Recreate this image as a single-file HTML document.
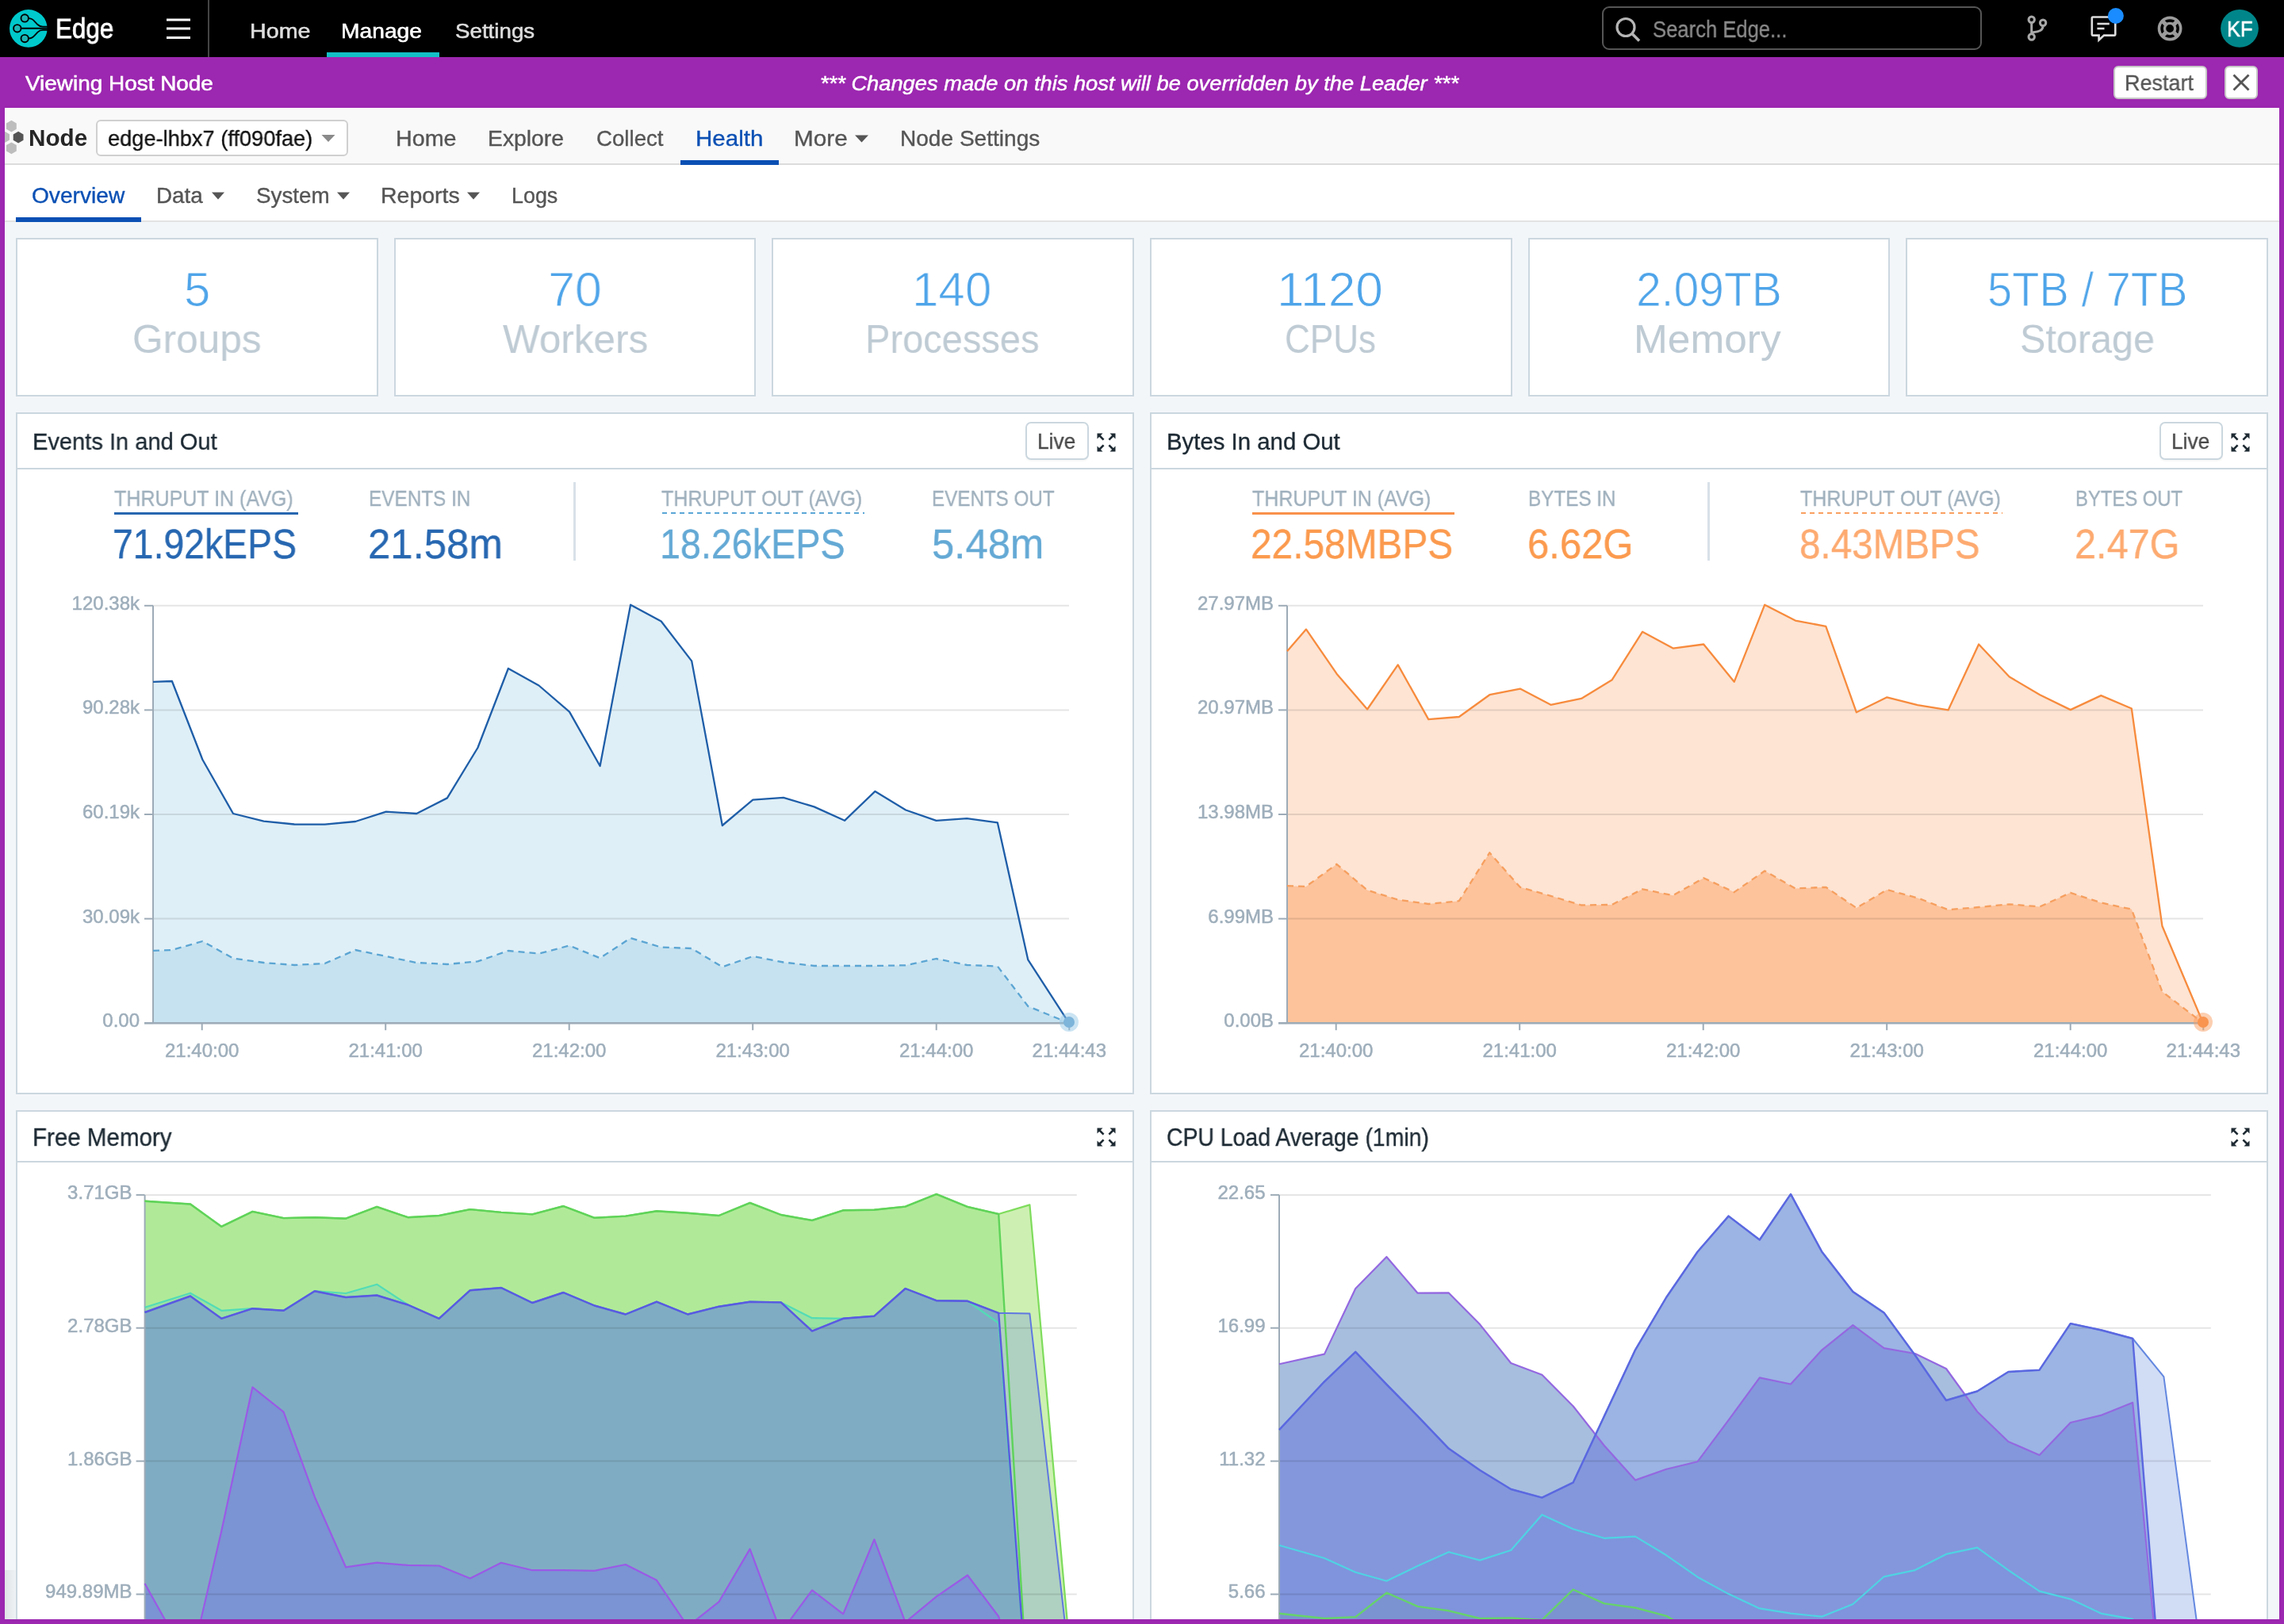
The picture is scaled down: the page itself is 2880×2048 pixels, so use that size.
<!DOCTYPE html>
<html><head><meta charset="utf-8"><title>Edge - Health Overview</title>
<style>
html,body{margin:0;padding:0;width:2880px;height:2048px;overflow:hidden;background:#f3f6f9}
body{position:relative;font-family:"Liberation Sans",sans-serif}
.t{position:absolute;white-space:pre;line-height:1;transform-origin:0 0;will-change:transform}
.cl{font-family:"Liberation Sans",sans-serif;font-size:24px;fill:#9eaebb;stroke:#9eaebb;stroke-width:0.5px}
</style></head><body>
<div style="position:absolute;left:0px;top:0px;width:2880px;height:72px;background:#000"></div>
<div style="position:absolute;left:0px;top:72px;width:2880px;height:64px;background:#9c27b0"></div>
<div style="position:absolute;left:0px;top:136px;width:6px;height:1912px;background:#9c27b0"></div>
<div style="position:absolute;left:2874px;top:136px;width:6px;height:1912px;background:#9c27b0"></div>
<div style="position:absolute;left:6px;top:136px;width:2868px;height:71px;background:#f9f9f9"></div>
<div style="position:absolute;left:6px;top:206px;width:2868px;height:2px;background:#dcdcdc"></div>
<div style="position:absolute;left:6px;top:208px;width:2868px;height:70px;background:#fff"></div>
<div style="position:absolute;left:6px;top:278px;width:2868px;height:2px;background:#e2e2e2"></div>
<div style="position:absolute;left:6px;top:280px;width:2868px;height:1762px;background:#f3f6f9"></div>
<div style="position:absolute;left:6px;top:1980px;width:14px;height:62px;background:linear-gradient(90deg,#e1e4e6,#eef2f5)"></div>
<svg style="position:absolute;left:0;top:0" width="2880" height="72">
<circle cx="35.8" cy="35.9" r="23.8" fill="#00c9cc"/>
<g fill="none" stroke="#000" stroke-width="1.8">
<path d="M36 23.2 C39.5 23.2 41 24 43.5 26.8 L47.5 31 C49.5 33 51 33.7 54 33.7 L60 33.7"/>
<path d="M36 48.4 C39.5 48.4 41 47.6 43.5 44.8 L47.5 40.6 C49.5 38.6 51 37.9 54 37.9 L60 37.9"/>
<path d="M26.4 35.8 L60 35.8" stroke-width="2"/>
</g>
<g fill="#1fb5b5" stroke="#000" stroke-width="1.9">
<circle cx="31.2" cy="22.9" r="4.7"/><circle cx="21.8" cy="35.8" r="4.7"/><circle cx="31.2" cy="48.6" r="4.7"/>
</g>
<g stroke="#fff" stroke-width="3"><line x1="210" y1="25" x2="240" y2="25"/><line x1="210" y1="36" x2="240" y2="36"/><line x1="210" y1="47.5" x2="240" y2="47.5"/></g>
<line x1="263" y1="0" x2="263" y2="72" stroke="#444" stroke-width="2"/>
<rect x="412" y="66" width="142" height="6" fill="#13bfc6"/>
<rect x="2021" y="9" width="477" height="53" rx="8" fill="#000" stroke="#555" stroke-width="2"/>
<circle cx="2050" cy="34.5" r="11" fill="none" stroke="#b5b5b5" stroke-width="3.2"/>
<line x1="2058" y1="42.5" x2="2067" y2="51.5" stroke="#b5b5b5" stroke-width="3.6"/>
<g fill="none" stroke="#a8a8a8" stroke-width="3">
<circle cx="2561.7" cy="24.8" r="3.7"/><circle cx="2576.1" cy="28.7" r="3.7"/><circle cx="2561.7" cy="46.5" r="3.7"/>
<path d="M2561.7 28.5 L2561.7 42.8"/>
<path d="M2576.1 32.3 C2576.1 38 2573 39.5 2562 41"/>
</g>
<g fill="none" stroke="#dcdcdc" stroke-width="2.6">
<path d="M2639 21.5 H2666 Q2667.3 21.5 2667.3 23 V43 Q2667.3 44.6 2666 44.6 H2653 L2646.6 50.5 V44.6 H2639 Q2637.8 44.6 2637.8 43 V23 Q2637.8 21.5 2639 21.5 Z"/>
<line x1="2644.4" y1="30" x2="2659.8" y2="30"/><line x1="2644.4" y1="36" x2="2653.5" y2="36"/>
</g>
<circle cx="2667.9" cy="20" r="10" fill="#1a8cff"/>
<g fill="none" stroke="#9c9c9c">
<circle cx="2736.1" cy="36" r="13.6" stroke-width="3.6"/>
<circle cx="2736.1" cy="36" r="6.6" stroke-width="3.4"/>
<g stroke-width="5.2"><line x1="2726.6" y1="26.5" x2="2731.3" y2="31.2"/><line x1="2745.6" y1="26.5" x2="2740.9" y2="31.2"/><line x1="2726.6" y1="45.5" x2="2731.3" y2="40.8"/><line x1="2745.6" y1="45.5" x2="2740.9" y2="40.8"/></g>
</g>
<circle cx="2824" cy="35.8" r="23.9" fill="#00868a"/>
</svg>
<div class="t" style="left:70.31px;top:19.00px;font-size:34.16px;color:#fff;font-weight:normal;font-style:normal;transform:scaleX(0.9180);-webkit-text-stroke:0.8px #fff;">Edge</div>
<div class="t" style="left:314.63px;top:25.71px;font-size:26.45px;color:#dedede;font-weight:normal;font-style:normal;transform:scaleX(1.0854);-webkit-text-stroke:0.55px #dedede;">Home</div>
<div class="t" style="left:430.17px;top:25.71px;font-size:26.45px;color:#fff;font-weight:normal;font-style:normal;transform:scaleX(1.0677);-webkit-text-stroke:0.55px #fff;">Manage</div>
<div class="t" style="left:573.75px;top:25.71px;font-size:26.45px;color:#dedede;font-weight:normal;font-style:normal;transform:scaleX(1.0487);-webkit-text-stroke:0.55px #dedede;">Settings</div>
<div class="t" style="left:2083.85px;top:23.01px;font-size:29.07px;color:#8a8a8a;font-weight:normal;font-style:normal;transform:scaleX(0.8812);-webkit-text-stroke:0.35px #8a8a8a;">Search Edge...</div>
<div class="t" style="left:2807.60px;top:22.50px;font-size:28.05px;color:#fff;font-weight:normal;font-style:normal;transform:scaleX(0.9074);-webkit-text-stroke:0.6px #fff;">KF</div>
<div class="t" style="left:32.36px;top:92.75px;font-size:25.44px;color:#fff;font-weight:normal;font-style:normal;transform:scaleX(1.0973);-webkit-text-stroke:0.55px #fff;">Viewing Host Node</div>
<div class="t" style="left:1034.36px;top:91.75px;font-size:26.53px;color:#fff;font-weight:normal;font-style:italic;transform:scaleX(1.0286);-webkit-text-stroke:0.5px #fff;">*** Changes made on this host will be overridden by the Leader ***</div>
<div style="position:absolute;left:2665px;top:83px;width:118px;height:42px;background:#fff;border:2px solid #c8c8c8;border-radius:6px;box-sizing:border-box"></div>
<div class="t" style="left:2679.27px;top:90.76px;font-size:27.25px;color:#555;font-weight:normal;font-style:normal;transform:scaleX(0.9898);-webkit-text-stroke:0.35px #555;">Restart</div>
<div style="position:absolute;left:2805px;top:83px;width:42px;height:42px;background:#fff;border:2px solid #c8c8c8;border-radius:6px;box-sizing:border-box"></div>
<svg style="position:absolute;left:2805px;top:83px" width="42" height="42"><g stroke="#555" stroke-width="2.8"><line x1="11.5" y1="11.5" x2="30.5" y2="30.5"/><line x1="30.5" y1="11.5" x2="11.5" y2="30.5"/></g></svg>
<svg style="position:absolute;left:0;top:136px" width="40" height="71">
<defs><path id="hx" d="M0 -7.4 L6.4 -3.7 L6.4 3.7 L0 7.4 L-6.4 3.7 L-6.4 -3.7 Z"/></defs>
<use href="#hx" x="14.4" y="23.1" fill="#bdbdbd"/>
<use href="#hx" x="5.6" y="36.9" fill="#bdbdbd"/>
<use href="#hx" x="14.4" y="50.8" fill="#bdbdbd"/>
<use href="#hx" x="23.1" y="37.1" fill="#555"/>
</svg>
<div style="position:absolute;left:0px;top:136px;width:6px;height:71px;background:#9c27b0"></div>
<div class="t" style="left:35.80px;top:160.01px;font-size:29.07px;color:#262626;font-weight:bold;font-style:normal;transform:scaleX(1.0205);">Node</div>
<div style="position:absolute;left:121px;top:151px;width:318px;height:46px;background:#fff;border:2px solid #d0d0d0;border-radius:6px;box-sizing:border-box"></div>
<div class="t" style="left:135.84px;top:161.25px;font-size:27.98px;color:#111;font-weight:normal;font-style:normal;transform:scaleX(0.9730);-webkit-text-stroke:0.35px #111;">edge-lhbx7 (ff090fae)</div>
<svg style="position:absolute;left:0;top:0" width="2880" height="300"><path d="M405.5 170 L422.5 170 L414 179 Z" fill="#8a8a8a"/><path d="M1078 170.5 L1095 170.5 L1086.5 179.5 Z" fill="#555"/><path d="M267 242.5 L283 242.5 L275 251.5 Z" fill="#555"/><path d="M425 242.5 L441 242.5 L433 251.5 Z" fill="#555"/><path d="M589 242.5 L605 242.5 L597 251.5 Z" fill="#555"/></svg>
<div class="t" style="left:498.63px;top:161.26px;font-size:27.25px;color:#555;font-weight:normal;font-style:normal;transform:scaleX(1.0535);-webkit-text-stroke:0.35px #555;">Home</div>
<div class="t" style="left:614.66px;top:161.26px;font-size:27.25px;color:#555;font-weight:normal;font-style:normal;transform:scaleX(1.0396);-webkit-text-stroke:0.35px #555;">Explore</div>
<div class="t" style="left:751.62px;top:161.26px;font-size:27.25px;color:#555;font-weight:normal;font-style:normal;transform:scaleX(1.0152);-webkit-text-stroke:0.35px #555;">Collect</div>
<div class="t" style="left:1000.55px;top:161.26px;font-size:27.25px;color:#555;font-weight:normal;font-style:normal;transform:scaleX(1.0910);-webkit-text-stroke:0.35px #555;">More</div>
<div class="t" style="left:1134.68px;top:161.26px;font-size:27.25px;color:#555;font-weight:normal;font-style:normal;transform:scaleX(1.0297);-webkit-text-stroke:0.35px #555;">Node Settings</div>
<div class="t" style="left:876.57px;top:161.26px;font-size:27.25px;color:#0b50b4;font-weight:normal;font-style:normal;transform:scaleX(1.0828);-webkit-text-stroke:0.35px #0b50b4;">Health</div>
<div style="position:absolute;left:858px;top:202px;width:124px;height:6px;background:#0b50b4"></div>
<div class="t" style="left:39.66px;top:234.00px;font-size:26.89px;color:#0b50b4;font-weight:normal;font-style:normal;transform:scaleX(1.0464);-webkit-text-stroke:0.35px #0b50b4;">Overview</div>
<div class="t" style="left:196.70px;top:234.00px;font-size:26.89px;color:#555;font-weight:normal;font-style:normal;transform:scaleX(1.0351);-webkit-text-stroke:0.35px #555;">Data</div>
<div class="t" style="left:323.25px;top:234.00px;font-size:26.89px;color:#555;font-weight:normal;font-style:normal;transform:scaleX(1.0329);-webkit-text-stroke:0.35px #555;">System</div>
<div class="t" style="left:480.15px;top:234.00px;font-size:26.89px;color:#555;font-weight:normal;font-style:normal;transform:scaleX(1.0602);-webkit-text-stroke:0.35px #555;">Reports</div>
<div class="t" style="left:644.79px;top:234.00px;font-size:26.89px;color:#555;font-weight:normal;font-style:normal;transform:scaleX(0.9978);-webkit-text-stroke:0.35px #555;">Logs</div>
<div style="position:absolute;left:20px;top:274px;width:158px;height:6px;background:#0b50b4"></div>
<div style="position:absolute;left:20.0px;top:300px;width:456.67px;height:200px;background:#fff;border:2px solid #cbd7df;box-sizing:border-box"></div>
<div class="t" style="left:231.68px;top:334.01px;font-size:61.77px;color:#4ea4e9;font-weight:normal;font-style:normal;transform:scaleX(0.9713);-webkit-text-stroke:1.0px #fff;">5</div>
<div class="t" style="left:166.60px;top:403.00px;font-size:50.15px;color:#bfcbd4;font-weight:normal;font-style:normal;transform:scaleX(0.9893);-webkit-text-stroke:0.1px #bfcbd4;">Groups</div>
<div style="position:absolute;left:496.67px;top:300px;width:456.67px;height:200px;background:#fff;border:2px solid #cbd7df;box-sizing:border-box"></div>
<div class="t" style="left:690.69px;top:334.01px;font-size:61.77px;color:#4ea4e9;font-weight:normal;font-style:normal;transform:scaleX(0.9895);-webkit-text-stroke:1.0px #fff;">70</div>
<div class="t" style="left:634.12px;top:403.00px;font-size:50.15px;color:#bfcbd4;font-weight:normal;font-style:normal;transform:scaleX(0.9862);-webkit-text-stroke:0.1px #bfcbd4;">Workers</div>
<div style="position:absolute;left:973.33px;top:300px;width:456.67px;height:200px;background:#fff;border:2px solid #cbd7df;box-sizing:border-box"></div>
<div class="t" style="left:1150.40px;top:334.01px;font-size:61.77px;color:#4ea4e9;font-weight:normal;font-style:normal;transform:scaleX(0.9734);-webkit-text-stroke:1.0px #fff;">140</div>
<div class="t" style="left:1090.78px;top:403.00px;font-size:50.15px;color:#bfcbd4;font-weight:normal;font-style:normal;transform:scaleX(0.9379);-webkit-text-stroke:0.1px #bfcbd4;">Processes</div>
<div style="position:absolute;left:1450.0px;top:300px;width:456.67px;height:200px;background:#fff;border:2px solid #cbd7df;box-sizing:border-box"></div>
<div class="t" style="left:1610.16px;top:334.01px;font-size:61.77px;color:#4ea4e9;font-weight:normal;font-style:normal;transform:scaleX(1.0090);-webkit-text-stroke:1.0px #fff;">1120</div>
<div class="t" style="left:1620.48px;top:403.00px;font-size:50.15px;color:#bfcbd4;font-weight:normal;font-style:normal;transform:scaleX(0.8782);-webkit-text-stroke:0.1px #bfcbd4;">CPUs</div>
<div style="position:absolute;left:1926.67px;top:300px;width:456.67px;height:200px;background:#fff;border:2px solid #cbd7df;box-sizing:border-box"></div>
<div class="t" style="left:2063.15px;top:334.01px;font-size:61.77px;color:#4ea4e9;font-weight:normal;font-style:normal;transform:scaleX(0.9228);-webkit-text-stroke:1.0px #fff;">2.09TB</div>
<div class="t" style="left:2060.11px;top:403.00px;font-size:50.15px;color:#bfcbd4;font-weight:normal;font-style:normal;transform:scaleX(1.0249);-webkit-text-stroke:0.1px #bfcbd4;">Memory</div>
<div style="position:absolute;left:2403.34px;top:300px;width:456.67px;height:200px;background:#fff;border:2px solid #cbd7df;box-sizing:border-box"></div>
<div class="t" style="left:2505.72px;top:334.01px;font-size:61.77px;color:#4ea4e9;font-weight:normal;font-style:normal;transform:scaleX(0.9082);-webkit-text-stroke:1.0px #fff;">5TB / 7TB</div>
<div class="t" style="left:2546.58px;top:403.00px;font-size:50.15px;color:#bfcbd4;font-weight:normal;font-style:normal;transform:scaleX(0.9682);-webkit-text-stroke:0.1px #bfcbd4;">Storage</div>
<div style="position:absolute;left:20px;top:520px;width:1410px;height:860px;background:#fff;border:2px solid #cbd7df;box-sizing:border-box"></div>
<div style="position:absolute;left:20px;top:590px;width:1410px;height:2px;background:#cbd7df"></div>
<div class="t" style="left:40.60px;top:542.81px;font-size:29.22px;color:#1d2a34;font-weight:normal;font-style:normal;transform:scaleX(0.9946);-webkit-text-stroke:0.35px #1d2a34;">Events In and Out</div>
<div style="position:absolute;left:1293px;top:532px;width:80px;height:48px;background:#fff;border:2px solid #cbd7df;border-radius:7px;box-sizing:border-box;box-shadow:0 2px 2px rgba(0,0,0,0.03)"></div>
<div class="t" style="left:1307.93px;top:543.00px;font-size:28.05px;color:#4a4a4a;font-weight:normal;font-style:normal;transform:scaleX(0.9395);-webkit-text-stroke:0.35px #4a4a4a;">Live</div>
<svg style="position:absolute;left:1383px;top:546px" width="24" height="24" viewBox="0 0 24 24"><g stroke="#1e2a33" stroke-width="2.6" fill="#1e2a33">
<line x1="3" y1="3" x2="8.6" y2="8.6"/><line x1="21" y1="3" x2="15.4" y2="8.6"/><line x1="3" y1="21" x2="8.6" y2="15.4"/><line x1="21" y1="21" x2="15.4" y2="15.4"/></g>
<g fill="#1e2a33"><path d="M0.5 0.5 H7.5 L0.5 7.5 Z"/><path d="M23.5 0.5 H16.5 L23.5 7.5 Z"/><path d="M0.5 23.5 H7.5 L0.5 16.5 Z"/><path d="M23.5 23.5 H16.5 L23.5 16.5 Z"/></g></svg>
<div style="position:absolute;left:1450px;top:520px;width:1410px;height:860px;background:#fff;border:2px solid #cbd7df;box-sizing:border-box"></div>
<div style="position:absolute;left:1450px;top:590px;width:1410px;height:2px;background:#cbd7df"></div>
<div class="t" style="left:1470.58px;top:542.81px;font-size:29.22px;color:#1d2a34;font-weight:normal;font-style:normal;transform:scaleX(1.0049);-webkit-text-stroke:0.35px #1d2a34;">Bytes In and Out</div>
<div style="position:absolute;left:2723px;top:532px;width:80px;height:48px;background:#fff;border:2px solid #cbd7df;border-radius:7px;box-sizing:border-box;box-shadow:0 2px 2px rgba(0,0,0,0.03)"></div>
<div class="t" style="left:2737.93px;top:543.00px;font-size:28.05px;color:#4a4a4a;font-weight:normal;font-style:normal;transform:scaleX(0.9395);-webkit-text-stroke:0.35px #4a4a4a;">Live</div>
<svg style="position:absolute;left:2813px;top:546px" width="24" height="24" viewBox="0 0 24 24"><g stroke="#1e2a33" stroke-width="2.6" fill="#1e2a33">
<line x1="3" y1="3" x2="8.6" y2="8.6"/><line x1="21" y1="3" x2="15.4" y2="8.6"/><line x1="3" y1="21" x2="8.6" y2="15.4"/><line x1="21" y1="21" x2="15.4" y2="15.4"/></g>
<g fill="#1e2a33"><path d="M0.5 0.5 H7.5 L0.5 7.5 Z"/><path d="M23.5 0.5 H16.5 L23.5 7.5 Z"/><path d="M0.5 23.5 H7.5 L0.5 16.5 Z"/><path d="M23.5 23.5 H16.5 L23.5 16.5 Z"/></g></svg>
<div style="position:absolute;left:20px;top:1400px;width:1410px;height:700px;background:#fff;border:2px solid #cbd7df;box-sizing:border-box"></div>
<div style="position:absolute;left:20px;top:1464px;width:1410px;height:2px;background:#cbd7df"></div>
<div class="t" style="left:40.56px;top:1418.71px;font-size:30.67px;color:#1d2a34;font-weight:normal;font-style:normal;transform:scaleX(0.9626);-webkit-text-stroke:0.35px #1d2a34;">Free Memory</div>
<svg style="position:absolute;left:1383px;top:1421.6px" width="24" height="24" viewBox="0 0 24 24"><g stroke="#1e2a33" stroke-width="2.6" fill="#1e2a33">
<line x1="3" y1="3" x2="8.6" y2="8.6"/><line x1="21" y1="3" x2="15.4" y2="8.6"/><line x1="3" y1="21" x2="8.6" y2="15.4"/><line x1="21" y1="21" x2="15.4" y2="15.4"/></g>
<g fill="#1e2a33"><path d="M0.5 0.5 H7.5 L0.5 7.5 Z"/><path d="M23.5 0.5 H16.5 L23.5 7.5 Z"/><path d="M0.5 23.5 H7.5 L0.5 16.5 Z"/><path d="M23.5 23.5 H16.5 L23.5 16.5 Z"/></g></svg>
<div style="position:absolute;left:1450px;top:1400px;width:1410px;height:700px;background:#fff;border:2px solid #cbd7df;box-sizing:border-box"></div>
<div style="position:absolute;left:1450px;top:1464px;width:1410px;height:2px;background:#cbd7df"></div>
<div class="t" style="left:1471.38px;top:1418.71px;font-size:30.67px;color:#1d2a34;font-weight:normal;font-style:normal;transform:scaleX(0.9261);-webkit-text-stroke:0.35px #1d2a34;">CPU Load Average (1min)</div>
<svg style="position:absolute;left:2813px;top:1421.6px" width="24" height="24" viewBox="0 0 24 24"><g stroke="#1e2a33" stroke-width="2.6" fill="#1e2a33">
<line x1="3" y1="3" x2="8.6" y2="8.6"/><line x1="21" y1="3" x2="15.4" y2="8.6"/><line x1="3" y1="21" x2="8.6" y2="15.4"/><line x1="21" y1="21" x2="15.4" y2="15.4"/></g>
<g fill="#1e2a33"><path d="M0.5 0.5 H7.5 L0.5 7.5 Z"/><path d="M23.5 0.5 H16.5 L23.5 7.5 Z"/><path d="M0.5 23.5 H7.5 L0.5 16.5 Z"/><path d="M23.5 23.5 H16.5 L23.5 16.5 Z"/></g></svg>
<div class="t" style="left:143.84px;top:614.81px;font-size:27.33px;color:#9fb0bd;font-weight:normal;font-style:normal;transform:scaleX(0.9158);-webkit-text-stroke:0.35px #9fb0bd;">THRUPUT IN (AVG)</div>
<div class="t" style="left:142.08px;top:660.01px;font-size:52.33px;color:#2767b1;font-weight:normal;font-style:normal;transform:scaleX(0.8859);-webkit-text-stroke:0.35px #2767b1;">71.92kEPS</div>
<div style="position:absolute;left:144.4px;top:646px;width:231.6px;height:2.5px;background:#2767b1"></div>
<div class="t" style="left:464.59px;top:614.81px;font-size:27.33px;color:#9fb0bd;font-weight:normal;font-style:normal;transform:scaleX(0.8900);-webkit-text-stroke:0.35px #9fb0bd;">EVENTS IN</div>
<div class="t" style="left:464.05px;top:660.01px;font-size:52.33px;color:#2767b1;font-weight:normal;font-style:normal;transform:scaleX(0.9728);-webkit-text-stroke:0.35px #2767b1;">21.58m</div>
<div style="position:absolute;left:723px;top:608px;width:3px;height:99px;background:#d8e1e8"></div>
<div class="t" style="left:834.44px;top:614.81px;font-size:27.33px;color:#9fb0bd;font-weight:normal;font-style:normal;transform:scaleX(0.9160);-webkit-text-stroke:0.35px #9fb0bd;">THRUPUT OUT (AVG)</div>
<div class="t" style="left:831.50px;top:660.01px;font-size:52.33px;color:#64a9d5;font-weight:normal;font-style:normal;transform:scaleX(0.8920);-webkit-text-stroke:0.35px #64a9d5;">18.26kEPS</div>
<div style="position:absolute;left:835px;top:646px;width:255px;height:2px;background:repeating-linear-gradient(90deg,#5aa6d6 0 6px,transparent 6px 11px)"></div>
<div class="t" style="left:1175.00px;top:614.81px;font-size:27.33px;color:#9fb0bd;font-weight:normal;font-style:normal;transform:scaleX(0.8851);-webkit-text-stroke:0.35px #9fb0bd;">EVENTS OUT</div>
<div class="t" style="left:1174.97px;top:660.01px;font-size:52.33px;color:#64a9d5;font-weight:normal;font-style:normal;transform:scaleX(0.9716);-webkit-text-stroke:0.35px #64a9d5;">5.48m</div>
<div class="t" style="left:1578.74px;top:614.81px;font-size:27.33px;color:#9fb0bd;font-weight:normal;font-style:normal;transform:scaleX(0.9142);-webkit-text-stroke:0.35px #9fb0bd;">THRUPUT IN (AVG)</div>
<div class="t" style="left:1576.91px;top:660.01px;font-size:52.33px;color:#fb9a4e;font-weight:normal;font-style:normal;transform:scaleX(0.9139);-webkit-text-stroke:0.35px #fb9a4e;">22.58MBPS</div>
<div style="position:absolute;left:1579.3px;top:646px;width:254.7px;height:2.5px;background:#f9914a"></div>
<div class="t" style="left:1926.60px;top:614.81px;font-size:27.33px;color:#9fb0bd;font-weight:normal;font-style:normal;transform:scaleX(0.8865);-webkit-text-stroke:0.35px #9fb0bd;">BYTES IN</div>
<div class="t" style="left:1926.15px;top:660.01px;font-size:52.33px;color:#fb9a4e;font-weight:normal;font-style:normal;transform:scaleX(0.9364);-webkit-text-stroke:0.35px #fb9a4e;">6.62G</div>
<div style="position:absolute;left:2153px;top:608px;width:3px;height:99px;background:#d8e1e8"></div>
<div class="t" style="left:2270.24px;top:614.81px;font-size:27.33px;color:#9fb0bd;font-weight:normal;font-style:normal;transform:scaleX(0.9146);-webkit-text-stroke:0.35px #9fb0bd;">THRUPUT OUT (AVG)</div>
<div class="t" style="left:2268.78px;top:660.01px;font-size:52.33px;color:#fdaa70;font-weight:normal;font-style:normal;transform:scaleX(0.9098);-webkit-text-stroke:0.35px #fdaa70;">8.43MBPS</div>
<div style="position:absolute;left:2270.8px;top:646px;width:254.6px;height:2px;background:repeating-linear-gradient(90deg,#f9a060 0 6px,transparent 6px 11px)"></div>
<div class="t" style="left:2616.53px;top:614.81px;font-size:27.33px;color:#9fb0bd;font-weight:normal;font-style:normal;transform:scaleX(0.8717);-webkit-text-stroke:0.35px #9fb0bd;">BYTES OUT</div>
<div class="t" style="left:2616.07px;top:660.01px;font-size:52.33px;color:#fdaa70;font-weight:normal;font-style:normal;transform:scaleX(0.9298);-webkit-text-stroke:0.35px #fdaa70;">2.47G</div>
<svg style="position:absolute;left:0;top:0" width="2880" height="2048">
<defs><clipPath id="cEv"><rect x="22" y="590" width="1406" height="787"/></clipPath><clipPath id="cBy"><rect x="1452" y="590" width="1406" height="787"/></clipPath><clipPath id="cMem"><rect x="22" y="1470" width="1406" height="572"/></clipPath><clipPath id="cCpu"><rect x="1452" y="1470" width="1406" height="572"/></clipPath></defs>
<g clip-path="url(#cEv)"><path d="M193.0,1290.2 L193.0,859.8 L216.9,859.0 L255.4,958.0 L294.0,1026.0 L332.6,1035.7 L371.1,1039.5 L409.6,1039.7 L448.2,1036.0 L486.8,1023.7 L525.3,1026.0 L563.9,1006.4 L602.4,943.0 L640.9,843.0 L679.5,864.5 L718.0,897.6 L756.6,966.0 L795.1,762.7 L833.7,783.5 L872.2,833.6 L910.8,1041.0 L949.3,1008.6 L987.9,1005.8 L1026.5,1017.4 L1065.0,1034.8 L1103.5,997.9 L1142.1,1021.5 L1180.6,1034.8 L1219.2,1032.2 L1257.8,1037.3 L1296.3,1210.4 L1348.0,1290.2 L1348.0,1290.2 Z" fill="#dfeff7" /><path d="M193.0,1290.2 L193.0,1198.9 L216.9,1198.0 L255.4,1187.0 L294.0,1208.5 L332.6,1214.0 L371.1,1217.0 L409.6,1215.0 L448.2,1198.0 L486.8,1206.0 L525.3,1214.0 L563.9,1216.0 L602.4,1212.4 L640.9,1199.0 L679.5,1202.6 L718.0,1192.5 L756.6,1208.2 L795.1,1183.0 L833.7,1194.6 L872.2,1196.0 L910.8,1219.4 L949.3,1206.0 L987.9,1213.5 L1026.5,1218.0 L1065.0,1218.0 L1103.5,1218.0 L1142.1,1217.3 L1180.6,1209.0 L1219.2,1217.0 L1257.8,1218.5 L1296.3,1269.0 L1348.0,1290.2 L1348.0,1290.2 Z" fill="#c6e2f0" /><line x1="193" y1="763.8" x2="1348" y2="763.8" stroke="rgba(0,0,0,0.1)" stroke-width="2"/><line x1="182" y1="763.8" x2="193" y2="763.8" stroke="#9dabb7" stroke-width="2"/><line x1="193" y1="895.4" x2="1348" y2="895.4" stroke="rgba(0,0,0,0.1)" stroke-width="2"/><line x1="182" y1="895.4" x2="193" y2="895.4" stroke="#9dabb7" stroke-width="2"/><line x1="193" y1="1027.0" x2="1348" y2="1027.0" stroke="rgba(0,0,0,0.1)" stroke-width="2"/><line x1="182" y1="1027.0" x2="193" y2="1027.0" stroke="#9dabb7" stroke-width="2"/><line x1="193" y1="1158.6" x2="1348" y2="1158.6" stroke="rgba(0,0,0,0.1)" stroke-width="2"/><line x1="182" y1="1158.6" x2="193" y2="1158.6" stroke="#9dabb7" stroke-width="2"/><line x1="193" y1="1290.2" x2="1348" y2="1290.2" stroke="rgba(0,0,0,0.1)" stroke-width="2"/><line x1="182" y1="1290.2" x2="193" y2="1290.2" stroke="#9dabb7" stroke-width="2"/><line x1="193" y1="763.8" x2="193" y2="1290.2" stroke="#9dabb7" stroke-width="2"/><text x="176" y="768.6999999999999" text-anchor="end" class="cl">120.38k</text><text x="176" y="900.3" text-anchor="end" class="cl">90.28k</text><text x="176" y="1031.9" text-anchor="end" class="cl">60.19k</text><text x="176" y="1163.5" text-anchor="end" class="cl">30.09k</text><text x="176" y="1295.1000000000001" text-anchor="end" class="cl">0.00</text><line x1="182" y1="1290.2" x2="1348" y2="1290.2" stroke="#9dabb7" stroke-width="2.5"/><line x1="254.7" y1="1290.2" x2="254.7" y2="1299.2" stroke="#9dabb7" stroke-width="2"/><text x="254.7" y="1333" text-anchor="middle" class="cl">21:40:00</text><line x1="486.2" y1="1290.2" x2="486.2" y2="1299.2" stroke="#9dabb7" stroke-width="2"/><text x="486.2" y="1333" text-anchor="middle" class="cl">21:41:00</text><line x1="717.7" y1="1290.2" x2="717.7" y2="1299.2" stroke="#9dabb7" stroke-width="2"/><text x="717.7" y="1333" text-anchor="middle" class="cl">21:42:00</text><line x1="949.2" y1="1290.2" x2="949.2" y2="1299.2" stroke="#9dabb7" stroke-width="2"/><text x="949.2" y="1333" text-anchor="middle" class="cl">21:43:00</text><line x1="1180.7" y1="1290.2" x2="1180.7" y2="1299.2" stroke="#9dabb7" stroke-width="2"/><text x="1180.7" y="1333" text-anchor="middle" class="cl">21:44:00</text><line x1="1348.3" y1="1290.2" x2="1348.3" y2="1299.2" stroke="#9dabb7" stroke-width="2"/><text x="1348.3" y="1333" text-anchor="middle" class="cl">21:44:43</text><path d="M193.0,859.8 L216.9,859.0 L255.4,958.0 L294.0,1026.0 L332.6,1035.7 L371.1,1039.5 L409.6,1039.7 L448.2,1036.0 L486.8,1023.7 L525.3,1026.0 L563.9,1006.4 L602.4,943.0 L640.9,843.0 L679.5,864.5 L718.0,897.6 L756.6,966.0 L795.1,762.7 L833.7,783.5 L872.2,833.6 L910.8,1041.0 L949.3,1008.6 L987.9,1005.8 L1026.5,1017.4 L1065.0,1034.8 L1103.5,997.9 L1142.1,1021.5 L1180.6,1034.8 L1219.2,1032.2 L1257.8,1037.3 L1296.3,1210.4 L1348.0,1290.2" fill="none" stroke="#1f5ea8" stroke-width="2.3" stroke-linejoin="round" /><path d="M193.0,1198.9 L216.9,1198.0 L255.4,1187.0 L294.0,1208.5 L332.6,1214.0 L371.1,1217.0 L409.6,1215.0 L448.2,1198.0 L486.8,1206.0 L525.3,1214.0 L563.9,1216.0 L602.4,1212.4 L640.9,1199.0 L679.5,1202.6 L718.0,1192.5 L756.6,1208.2 L795.1,1183.0 L833.7,1194.6 L872.2,1196.0 L910.8,1219.4 L949.3,1206.0 L987.9,1213.5 L1026.5,1218.0 L1065.0,1218.0 L1103.5,1218.0 L1142.1,1217.3 L1180.6,1209.0 L1219.2,1217.0 L1257.8,1218.5 L1296.3,1269.0 L1348.0,1290.2" fill="none" stroke="#5ba5d3" stroke-width="2.3" stroke-linejoin="round" stroke-dasharray="8 6"/><circle cx="1348" cy="1289" r="12" fill="rgba(140,196,228,0.45)"/><circle cx="1348" cy="1289" r="7" fill="#7db4da"/></g>
<g clip-path="url(#cBy)"><path d="M1623.0,1290.2 L1623.0,821.3 L1647.0,793.6 L1685.5,849.7 L1724.1,894.5 L1762.7,838.4 L1801.2,907.1 L1839.8,904.0 L1878.3,876.2 L1916.8,868.6 L1955.4,888.8 L1994.0,880.9 L2032.5,857.6 L2071.1,796.7 L2109.6,817.6 L2148.2,812.5 L2186.7,859.8 L2225.2,762.7 L2263.8,782.6 L2302.3,789.8 L2340.9,898.3 L2379.4,879.3 L2418.0,889.1 L2456.6,895.4 L2495.1,812.5 L2533.7,853.5 L2572.2,876.2 L2610.8,895.1 L2649.3,877.1 L2687.8,893.5 L2726.4,1167.7 L2778.0,1290.2 L2778.0,1290.2 Z" fill="#fde4d3" /><path d="M1623.0,1290.2 L1623.0,1117.2 L1647.0,1117.9 L1685.5,1089.8 L1724.1,1122.6 L1762.7,1134.6 L1801.2,1140.0 L1839.8,1136.2 L1878.3,1075.3 L1916.8,1118.8 L1955.4,1129.8 L1994.0,1141.5 L2032.5,1140.9 L2071.1,1121.3 L2109.6,1129.2 L2148.2,1107.2 L2186.7,1125.1 L2225.2,1098.3 L2263.8,1120.4 L2302.3,1118.8 L2340.9,1145.0 L2379.4,1122.0 L2418.0,1132.4 L2456.6,1147.2 L2495.1,1144.0 L2533.7,1140.3 L2572.2,1143.4 L2610.8,1125.8 L2649.3,1138.4 L2687.8,1146.6 L2726.4,1250.6 L2778.0,1290.2 L2778.0,1290.2 Z" fill="#fdc39b" /><line x1="1623" y1="763.8" x2="2778" y2="763.8" stroke="rgba(0,0,0,0.1)" stroke-width="2"/><line x1="1612" y1="763.8" x2="1623" y2="763.8" stroke="#9dabb7" stroke-width="2"/><line x1="1623" y1="895.4" x2="2778" y2="895.4" stroke="rgba(0,0,0,0.1)" stroke-width="2"/><line x1="1612" y1="895.4" x2="1623" y2="895.4" stroke="#9dabb7" stroke-width="2"/><line x1="1623" y1="1027.0" x2="2778" y2="1027.0" stroke="rgba(0,0,0,0.1)" stroke-width="2"/><line x1="1612" y1="1027.0" x2="1623" y2="1027.0" stroke="#9dabb7" stroke-width="2"/><line x1="1623" y1="1158.6" x2="2778" y2="1158.6" stroke="rgba(0,0,0,0.1)" stroke-width="2"/><line x1="1612" y1="1158.6" x2="1623" y2="1158.6" stroke="#9dabb7" stroke-width="2"/><line x1="1623" y1="1290.2" x2="2778" y2="1290.2" stroke="rgba(0,0,0,0.1)" stroke-width="2"/><line x1="1612" y1="1290.2" x2="1623" y2="1290.2" stroke="#9dabb7" stroke-width="2"/><line x1="1623" y1="763.8" x2="1623" y2="1290.2" stroke="#9dabb7" stroke-width="2"/><text x="1606" y="768.6999999999999" text-anchor="end" class="cl">27.97MB</text><text x="1606" y="900.3" text-anchor="end" class="cl">20.97MB</text><text x="1606" y="1031.9" text-anchor="end" class="cl">13.98MB</text><text x="1606" y="1163.5" text-anchor="end" class="cl">6.99MB</text><text x="1606" y="1295.1000000000001" text-anchor="end" class="cl">0.00B</text><line x1="1612" y1="1290.2" x2="2778" y2="1290.2" stroke="#9dabb7" stroke-width="2.5"/><line x1="1684.7" y1="1290.2" x2="1684.7" y2="1299.2" stroke="#9dabb7" stroke-width="2"/><text x="1684.7" y="1333" text-anchor="middle" class="cl">21:40:00</text><line x1="1916.2" y1="1290.2" x2="1916.2" y2="1299.2" stroke="#9dabb7" stroke-width="2"/><text x="1916.2" y="1333" text-anchor="middle" class="cl">21:41:00</text><line x1="2147.7" y1="1290.2" x2="2147.7" y2="1299.2" stroke="#9dabb7" stroke-width="2"/><text x="2147.7" y="1333" text-anchor="middle" class="cl">21:42:00</text><line x1="2379.2" y1="1290.2" x2="2379.2" y2="1299.2" stroke="#9dabb7" stroke-width="2"/><text x="2379.2" y="1333" text-anchor="middle" class="cl">21:43:00</text><line x1="2610.7" y1="1290.2" x2="2610.7" y2="1299.2" stroke="#9dabb7" stroke-width="2"/><text x="2610.7" y="1333" text-anchor="middle" class="cl">21:44:00</text><line x1="2778.3" y1="1290.2" x2="2778.3" y2="1299.2" stroke="#9dabb7" stroke-width="2"/><text x="2778.3" y="1333" text-anchor="middle" class="cl">21:44:43</text><path d="M1623.0,821.3 L1647.0,793.6 L1685.5,849.7 L1724.1,894.5 L1762.7,838.4 L1801.2,907.1 L1839.8,904.0 L1878.3,876.2 L1916.8,868.6 L1955.4,888.8 L1994.0,880.9 L2032.5,857.6 L2071.1,796.7 L2109.6,817.6 L2148.2,812.5 L2186.7,859.8 L2225.2,762.7 L2263.8,782.6 L2302.3,789.8 L2340.9,898.3 L2379.4,879.3 L2418.0,889.1 L2456.6,895.4 L2495.1,812.5 L2533.7,853.5 L2572.2,876.2 L2610.8,895.1 L2649.3,877.1 L2687.8,893.5 L2726.4,1167.7 L2778.0,1290.2" fill="none" stroke="#f78b3d" stroke-width="2.3" stroke-linejoin="round" /><path d="M1623.0,1117.2 L1647.0,1117.9 L1685.5,1089.8 L1724.1,1122.6 L1762.7,1134.6 L1801.2,1140.0 L1839.8,1136.2 L1878.3,1075.3 L1916.8,1118.8 L1955.4,1129.8 L1994.0,1141.5 L2032.5,1140.9 L2071.1,1121.3 L2109.6,1129.2 L2148.2,1107.2 L2186.7,1125.1 L2225.2,1098.3 L2263.8,1120.4 L2302.3,1118.8 L2340.9,1145.0 L2379.4,1122.0 L2418.0,1132.4 L2456.6,1147.2 L2495.1,1144.0 L2533.7,1140.3 L2572.2,1143.4 L2610.8,1125.8 L2649.3,1138.4 L2687.8,1146.6 L2726.4,1250.6 L2778.0,1290.2" fill="none" stroke="#f69f5f" stroke-width="2.3" stroke-linejoin="round" stroke-dasharray="8 6"/><circle cx="2778" cy="1289" r="12" fill="rgba(250,160,100,0.5)"/><circle cx="2778" cy="1289" r="7" fill="#f89450"/></g>
<g clip-path="url(#cMem)"><path d="M182.6,2178 L182.6,1514.7 L240.0,1518.5 L279.2,1546.8 L318.4,1527.9 L357.6,1536.1 L396.8,1535.2 L436.0,1536.7 L475.2,1521.9 L514.4,1535.2 L553.6,1533.0 L592.8,1525.1 L632.0,1528.9 L671.2,1531.4 L710.4,1521.0 L749.6,1535.8 L788.8,1533.6 L828.0,1527.3 L867.2,1529.8 L906.4,1533.0 L945.6,1516.9 L984.8,1532.0 L1024.0,1539.0 L1063.2,1526.3 L1102.4,1525.7 L1141.6,1521.6 L1180.8,1505.9 L1220.0,1521.9 L1259.2,1531.0 L1298.4,1519.4 L1357.8,2178.0 L1357.8,2178 Z" fill="#cdf0b2" /><path d="M182.6,2178 L182.6,1514.7 L240.0,1518.5 L279.2,1546.8 L318.4,1527.9 L357.6,1536.1 L396.8,1535.2 L436.0,1536.7 L475.2,1521.9 L514.4,1535.2 L553.6,1533.0 L592.8,1525.1 L632.0,1528.9 L671.2,1531.4 L710.4,1521.0 L749.6,1535.8 L788.8,1533.6 L828.0,1527.3 L867.2,1529.8 L906.4,1533.0 L945.6,1516.9 L984.8,1532.0 L1024.0,1539.0 L1063.2,1526.3 L1102.4,1525.7 L1141.6,1521.6 L1180.8,1505.9 L1220.0,1521.9 L1259.2,1531.0 L1298.4,2178.0 L1298.4,2178 Z" fill="#b0ea98" /><path d="M182.6,2178 L182.6,1655.0 L240.0,1634.5 L279.2,1662.8 L318.4,1650.2 L357.6,1652.8 L396.8,1628.2 L436.0,1636.0 L475.2,1633.5 L514.4,1645.5 L553.6,1662.8 L592.8,1627.2 L632.0,1624.0 L671.2,1643.0 L710.4,1630.0 L749.6,1646.5 L788.8,1657.5 L828.0,1641.7 L867.2,1657.5 L906.4,1647.7 L945.6,1641.7 L984.8,1642.4 L1024.0,1678.6 L1063.2,1662.8 L1102.4,1659.7 L1141.6,1625.0 L1180.8,1640.2 L1220.0,1640.8 L1259.2,1655.9 L1298.4,1656.5 L1357.8,2178.0 L1357.8,2178 Z" fill="#afd1c1" /><path d="M182.6,2178 L182.6,1648.7 L240.0,1630.7 L279.2,1652.8 L318.4,1650.2 L357.6,1652.8 L396.8,1628.2 L436.0,1631.0 L475.2,1619.7 L514.4,1645.5 L553.6,1662.8 L592.8,1627.2 L632.0,1624.0 L671.2,1643.0 L710.4,1630.0 L749.6,1646.5 L788.8,1657.5 L828.0,1641.7 L867.2,1657.5 L906.4,1647.7 L945.6,1641.7 L984.8,1642.4 L1024.0,1662.2 L1063.2,1662.8 L1102.4,1659.7 L1141.6,1625.0 L1180.8,1640.2 L1220.0,1640.8 L1259.2,1668.5 L1298.4,2178.0 L1298.4,2178 Z" fill="#98e2a4" /><path d="M182.6,2178 L182.6,1655.0 L240.0,1634.5 L279.2,1662.8 L318.4,1650.2 L357.6,1652.8 L396.8,1628.2 L436.0,1636.0 L475.2,1633.5 L514.4,1645.5 L553.6,1662.8 L592.8,1627.2 L632.0,1624.0 L671.2,1643.0 L710.4,1630.0 L749.6,1646.5 L788.8,1657.5 L828.0,1641.7 L867.2,1657.5 L906.4,1647.7 L945.6,1641.7 L984.8,1642.4 L1024.0,1678.6 L1063.2,1662.8 L1102.4,1659.7 L1141.6,1625.0 L1180.8,1640.2 L1220.0,1640.8 L1259.2,1655.9 L1298.4,2178.0 L1298.4,2178 Z" fill="#80acc3" /><path d="M182.6,2178 L182.6,1997.0 L240.0,2100.0 L279.2,1931.0 L318.4,1749.3 L357.6,1780.6 L396.8,1887.7 L436.0,1976.3 L475.2,1970.7 L514.4,1973.9 L553.6,1974.5 L592.8,1990.6 L632.0,1970.7 L671.2,1980.2 L710.4,1980.2 L749.6,1980.8 L788.8,1973.0 L828.0,1992.8 L867.2,2051.0 L906.4,2020.2 L945.6,1953.4 L984.8,2058.6 L1024.0,2005.4 L1063.2,2035.4 L1102.4,1941.4 L1141.6,2045.8 L1180.8,2013.3 L1220.0,1986.5 L1259.2,2038.5 L1298.4,2178.0 L1298.4,2178 Z" fill="#7b94d3" /><line x1="182.6" y1="1506.9" x2="1357.8" y2="1506.9" stroke="rgba(0,0,0,0.1)" stroke-width="2"/><line x1="171.6" y1="1506.9" x2="182.6" y2="1506.9" stroke="#9dabb7" stroke-width="2"/><line x1="182.6" y1="1674.7" x2="1357.8" y2="1674.7" stroke="rgba(0,0,0,0.1)" stroke-width="2"/><line x1="171.6" y1="1674.7" x2="182.6" y2="1674.7" stroke="#9dabb7" stroke-width="2"/><line x1="182.6" y1="1842.6" x2="1357.8" y2="1842.6" stroke="rgba(0,0,0,0.1)" stroke-width="2"/><line x1="171.6" y1="1842.6" x2="182.6" y2="1842.6" stroke="#9dabb7" stroke-width="2"/><line x1="182.6" y1="2010.5" x2="1357.8" y2="2010.5" stroke="rgba(0,0,0,0.1)" stroke-width="2"/><line x1="171.6" y1="2010.5" x2="182.6" y2="2010.5" stroke="#9dabb7" stroke-width="2"/><line x1="182.6" y1="1506.9" x2="182.6" y2="2100" stroke="#9dabb7" stroke-width="2"/><text x="166.5" y="1511.8000000000002" text-anchor="end" class="cl">3.71GB</text><text x="166.5" y="1679.6000000000001" text-anchor="end" class="cl">2.78GB</text><text x="166.5" y="1847.5" text-anchor="end" class="cl">1.86GB</text><text x="166.5" y="2015.4" text-anchor="end" class="cl">949.89MB</text><path d="M182.6,1514.7 L240.0,1518.5 L279.2,1546.8 L318.4,1527.9 L357.6,1536.1 L396.8,1535.2 L436.0,1536.7 L475.2,1521.9 L514.4,1535.2 L553.6,1533.0 L592.8,1525.1 L632.0,1528.9 L671.2,1531.4 L710.4,1521.0 L749.6,1535.8 L788.8,1533.6 L828.0,1527.3 L867.2,1529.8 L906.4,1533.0 L945.6,1516.9 L984.8,1532.0 L1024.0,1539.0 L1063.2,1526.3 L1102.4,1525.7 L1141.6,1521.6 L1180.8,1505.9 L1220.0,1521.9 L1259.2,1531.0 L1298.4,1519.4 L1357.8,2178.0" fill="none" stroke="#7edc5c" stroke-width="2.2" stroke-linejoin="round" /><path d="M182.6,1514.7 L240.0,1518.5 L279.2,1546.8 L318.4,1527.9 L357.6,1536.1 L396.8,1535.2 L436.0,1536.7 L475.2,1521.9 L514.4,1535.2 L553.6,1533.0 L592.8,1525.1 L632.0,1528.9 L671.2,1531.4 L710.4,1521.0 L749.6,1535.8 L788.8,1533.6 L828.0,1527.3 L867.2,1529.8 L906.4,1533.0 L945.6,1516.9 L984.8,1532.0 L1024.0,1539.0 L1063.2,1526.3 L1102.4,1525.7 L1141.6,1521.6 L1180.8,1505.9 L1220.0,1521.9 L1259.2,1531.0 L1298.4,2178.0" fill="none" stroke="#5fd35a" stroke-width="2.4" stroke-linejoin="round" /><path d="M182.6,1648.7 L240.0,1630.7 L279.2,1652.8 L318.4,1650.2 L357.6,1652.8 L396.8,1628.2 L436.0,1631.0 L475.2,1619.7 L514.4,1645.5 L553.6,1662.8 L592.8,1627.2 L632.0,1624.0 L671.2,1643.0 L710.4,1630.0 L749.6,1646.5 L788.8,1657.5 L828.0,1641.7 L867.2,1657.5 L906.4,1647.7 L945.6,1641.7 L984.8,1642.4 L1024.0,1662.2 L1063.2,1662.8 L1102.4,1659.7 L1141.6,1625.0 L1180.8,1640.2 L1220.0,1640.8 L1259.2,1668.5 L1298.4,2178.0" fill="none" stroke="#52dcb6" stroke-width="2.2" stroke-linejoin="round" /><path d="M182.6,1655.0 L240.0,1634.5 L279.2,1662.8 L318.4,1650.2 L357.6,1652.8 L396.8,1628.2 L436.0,1636.0 L475.2,1633.5 L514.4,1645.5 L553.6,1662.8 L592.8,1627.2 L632.0,1624.0 L671.2,1643.0 L710.4,1630.0 L749.6,1646.5 L788.8,1657.5 L828.0,1641.7 L867.2,1657.5 L906.4,1647.7 L945.6,1641.7 L984.8,1642.4 L1024.0,1678.6 L1063.2,1662.8 L1102.4,1659.7 L1141.6,1625.0 L1180.8,1640.2 L1220.0,1640.8 L1259.2,1655.9 L1298.4,1656.5 L1357.8,2178.0" fill="none" stroke="#5f78e0" stroke-width="2" stroke-linejoin="round" /><path d="M182.6,1655.0 L240.0,1634.5 L279.2,1662.8 L318.4,1650.2 L357.6,1652.8 L396.8,1628.2 L436.0,1636.0 L475.2,1633.5 L514.4,1645.5 L553.6,1662.8 L592.8,1627.2 L632.0,1624.0 L671.2,1643.0 L710.4,1630.0 L749.6,1646.5 L788.8,1657.5 L828.0,1641.7 L867.2,1657.5 L906.4,1647.7 L945.6,1641.7 L984.8,1642.4 L1024.0,1678.6 L1063.2,1662.8 L1102.4,1659.7 L1141.6,1625.0 L1180.8,1640.2 L1220.0,1640.8 L1259.2,1655.9 L1298.4,2178.0" fill="none" stroke="#5a5ae0" stroke-width="2.4" stroke-linejoin="round" /><path d="M182.6,1997.0 L240.0,2100.0 L279.2,1931.0 L318.4,1749.3 L357.6,1780.6 L396.8,1887.7 L436.0,1976.3 L475.2,1970.7 L514.4,1973.9 L553.6,1974.5 L592.8,1990.6 L632.0,1970.7 L671.2,1980.2 L710.4,1980.2 L749.6,1980.8 L788.8,1973.0 L828.0,1992.8 L867.2,2051.0 L906.4,2020.2 L945.6,1953.4 L984.8,2058.6 L1024.0,2005.4 L1063.2,2035.4 L1102.4,1941.4 L1141.6,2045.8 L1180.8,2013.3 L1220.0,1986.5 L1259.2,2038.5 L1298.4,2178.0" fill="none" stroke="#9a5ae6" stroke-width="2.2" stroke-linejoin="round" /></g>
<g clip-path="url(#cCpu)"><path d="M1613.0,2178 L1613.0,1803.1 L1670.0,1742.3 L1709.2,1704.8 L1748.4,1745.8 L1787.6,1785.8 L1826.8,1826.8 L1866.0,1854.0 L1905.2,1878.0 L1944.4,1888.7 L1983.6,1869.7 L2022.8,1786.0 L2062.0,1702.3 L2101.2,1636.0 L2140.4,1578.7 L2179.6,1533.6 L2218.8,1563.5 L2258.0,1505.9 L2297.2,1578.4 L2336.4,1628.9 L2375.6,1655.4 L2414.8,1709.0 L2454.0,1766.0 L2493.2,1754.5 L2532.4,1730.0 L2571.6,1727.7 L2610.8,1669.1 L2650.0,1677.5 L2689.2,1688.0 L2728.4,1736.1 L2787.8,2178.0 L2787.8,2178 Z" fill="#d1dcf5" /><path d="M1613.0,2178 L1613.0,1720.2 L1670.0,1707.6 L1709.2,1625.0 L1748.4,1585.0 L1787.6,1630.7 L1826.8,1630.4 L1866.0,1670.1 L1905.2,1719.0 L1944.4,1733.8 L1983.6,1773.2 L2022.8,1823.0 L2062.0,1866.6 L2101.2,1852.7 L2140.4,1843.3 L2179.6,1790.9 L2218.8,1737.3 L2258.0,1745.5 L2297.2,1702.6 L2336.4,1671.1 L2375.6,1700.1 L2414.8,1707.0 L2454.0,1726.0 L2493.2,1780.2 L2532.4,1818.0 L2571.6,1835.0 L2610.8,1794.0 L2650.0,1784.6 L2689.2,1768.8 L2728.4,2178.0 L2728.4,2178 Z" fill="#a7bedf" /><path d="M1613.0,2178 L1613.0,1803.1 L1670.0,1742.3 L1709.2,1704.8 L1748.4,1745.8 L1787.6,1785.8 L1826.8,1826.8 L1866.0,1854.0 L1905.2,1878.0 L1944.4,1888.7 L1983.6,1869.7 L2022.8,1786.0 L2062.0,1702.3 L2101.2,1636.0 L2140.4,1578.7 L2179.6,1533.6 L2218.8,1563.5 L2258.0,1505.9 L2297.2,1578.4 L2336.4,1628.9 L2375.6,1655.4 L2414.8,1709.0 L2454.0,1766.0 L2493.2,1754.5 L2532.4,1730.0 L2571.6,1727.7 L2610.8,1669.1 L2650.0,1677.5 L2689.2,1688.0 L2728.4,2178.0 L2728.4,2178 Z" fill="#9bb4e4" /><clipPath id="cpB"><path d="M1613.0,2178 L1613.0,1803.1 L1670.0,1742.3 L1709.2,1704.8 L1748.4,1745.8 L1787.6,1785.8 L1826.8,1826.8 L1866.0,1854.0 L1905.2,1878.0 L1944.4,1888.7 L1983.6,1869.7 L2022.8,1786.0 L2062.0,1702.3 L2101.2,1636.0 L2140.4,1578.7 L2179.6,1533.6 L2218.8,1563.5 L2258.0,1505.9 L2297.2,1578.4 L2336.4,1628.9 L2375.6,1655.4 L2414.8,1709.0 L2454.0,1766.0 L2493.2,1754.5 L2532.4,1730.0 L2571.6,1727.7 L2610.8,1669.1 L2650.0,1677.5 L2689.2,1688.0 L2728.4,2178.0 L2728.4,2178 Z"/></clipPath><path d="M1613.0,2178 L1613.0,1720.2 L1670.0,1707.6 L1709.2,1625.0 L1748.4,1585.0 L1787.6,1630.7 L1826.8,1630.4 L1866.0,1670.1 L1905.2,1719.0 L1944.4,1733.8 L1983.6,1773.2 L2022.8,1823.0 L2062.0,1866.6 L2101.2,1852.7 L2140.4,1843.3 L2179.6,1790.9 L2218.8,1737.3 L2258.0,1745.5 L2297.2,1702.6 L2336.4,1671.1 L2375.6,1700.1 L2414.8,1707.0 L2454.0,1726.0 L2493.2,1780.2 L2532.4,1818.0 L2571.6,1835.0 L2610.8,1794.0 L2650.0,1784.6 L2689.2,1768.8 L2728.4,2178.0 L2728.4,2178 Z" fill="#8497dc" clip-path="url(#cpB)"/><path d="M1613.0,2178 L1613.0,1948.7 L1670.0,1965.0 L1709.2,1982.7 L1748.4,1993.7 L1787.6,1974.8 L1826.8,1957.2 L1866.0,1967.6 L1905.2,1955.0 L1944.4,1910.2 L1983.6,1928.2 L2022.8,1939.8 L2062.0,1937.6 L2101.2,1961.3 L2140.4,1988.7 L2179.6,2010.1 L2218.8,2028.4 L2258.0,2034.7 L2297.2,2038.7 L2336.4,2023.0 L2375.6,1988.3 L2414.8,1980.1 L2454.0,1959.9 L2493.2,1951.7 L2532.4,1980.1 L2571.6,2006.6 L2610.8,2016.6 L2650.0,2034.9 L2689.2,2041.9 L2728.4,2178.0 L2728.4,2178 Z" fill="#7f94dc" /><path d="M1613.0,2178 L1613.0,2034.7 L1670.0,2041.0 L1709.2,2039.1 L1748.4,2008.6 L1787.6,2025.9 L1826.8,2031.3 L1866.0,2041.0 L1905.2,2040.4 L1944.4,2043.0 L1983.6,2004.5 L2022.8,2022.1 L2062.0,2027.5 L2101.2,2037.9 L2140.4,2060.0 L2179.6,2070.0 L2218.8,2080.0 L2258.0,2080.0 L2297.2,2080.0 L2336.4,2080.0 L2375.6,2080.0 L2414.8,2080.0 L2454.0,2080.0 L2493.2,2080.0 L2532.4,2080.0 L2571.6,2080.0 L2610.8,2080.0 L2650.0,2080.0 L2689.2,2080.0 L2728.4,2178.0 L2728.4,2178 Z" fill="#7b93d0" /><line x1="1613" y1="1506.9" x2="2787.8" y2="1506.9" stroke="rgba(0,0,0,0.1)" stroke-width="2"/><line x1="1602" y1="1506.9" x2="1613" y2="1506.9" stroke="#9dabb7" stroke-width="2"/><line x1="1613" y1="1674.7" x2="2787.8" y2="1674.7" stroke="rgba(0,0,0,0.1)" stroke-width="2"/><line x1="1602" y1="1674.7" x2="1613" y2="1674.7" stroke="#9dabb7" stroke-width="2"/><line x1="1613" y1="1842.6" x2="2787.8" y2="1842.6" stroke="rgba(0,0,0,0.1)" stroke-width="2"/><line x1="1602" y1="1842.6" x2="1613" y2="1842.6" stroke="#9dabb7" stroke-width="2"/><line x1="1613" y1="2010.5" x2="2787.8" y2="2010.5" stroke="rgba(0,0,0,0.1)" stroke-width="2"/><line x1="1602" y1="2010.5" x2="1613" y2="2010.5" stroke="#9dabb7" stroke-width="2"/><line x1="1613" y1="1506.9" x2="1613" y2="2100" stroke="#9dabb7" stroke-width="2"/><text x="1595.5" y="1511.8000000000002" text-anchor="end" class="cl">22.65</text><text x="1595.5" y="1679.6000000000001" text-anchor="end" class="cl">16.99</text><text x="1595.5" y="1847.5" text-anchor="end" class="cl">11.32</text><text x="1595.5" y="2015.4" text-anchor="end" class="cl">5.66</text><path d="M1613.0,1803.1 L1670.0,1742.3 L1709.2,1704.8 L1748.4,1745.8 L1787.6,1785.8 L1826.8,1826.8 L1866.0,1854.0 L1905.2,1878.0 L1944.4,1888.7 L1983.6,1869.7 L2022.8,1786.0 L2062.0,1702.3 L2101.2,1636.0 L2140.4,1578.7 L2179.6,1533.6 L2218.8,1563.5 L2258.0,1505.9 L2297.2,1578.4 L2336.4,1628.9 L2375.6,1655.4 L2414.8,1709.0 L2454.0,1766.0 L2493.2,1754.5 L2532.4,1730.0 L2571.6,1727.7 L2610.8,1669.1 L2650.0,1677.5 L2689.2,1688.0 L2728.4,1736.1 L2787.8,2178.0" fill="none" stroke="#6488e0" stroke-width="2" stroke-linejoin="round" /><path d="M1613.0,1720.2 L1670.0,1707.6 L1709.2,1625.0 L1748.4,1585.0 L1787.6,1630.7 L1826.8,1630.4 L1866.0,1670.1 L1905.2,1719.0 L1944.4,1733.8 L1983.6,1773.2 L2022.8,1823.0 L2062.0,1866.6 L2101.2,1852.7 L2140.4,1843.3 L2179.6,1790.9 L2218.8,1737.3 L2258.0,1745.5 L2297.2,1702.6 L2336.4,1671.1 L2375.6,1700.1 L2414.8,1707.0 L2454.0,1726.0 L2493.2,1780.2 L2532.4,1818.0 L2571.6,1835.0 L2610.8,1794.0 L2650.0,1784.6 L2689.2,1768.8 L2728.4,2178.0" fill="none" stroke="#9468e0" stroke-width="2.2" stroke-linejoin="round" /><path d="M1613.0,1803.1 L1670.0,1742.3 L1709.2,1704.8 L1748.4,1745.8 L1787.6,1785.8 L1826.8,1826.8 L1866.0,1854.0 L1905.2,1878.0 L1944.4,1888.7 L1983.6,1869.7 L2022.8,1786.0 L2062.0,1702.3 L2101.2,1636.0 L2140.4,1578.7 L2179.6,1533.6 L2218.8,1563.5 L2258.0,1505.9 L2297.2,1578.4 L2336.4,1628.9 L2375.6,1655.4 L2414.8,1709.0 L2454.0,1766.0 L2493.2,1754.5 L2532.4,1730.0 L2571.6,1727.7 L2610.8,1669.1 L2650.0,1677.5 L2689.2,1688.0 L2728.4,2178.0" fill="none" stroke="#5b68e0" stroke-width="2.4" stroke-linejoin="round" /><path d="M1613.0,1948.7 L1670.0,1965.0 L1709.2,1982.7 L1748.4,1993.7 L1787.6,1974.8 L1826.8,1957.2 L1866.0,1967.6 L1905.2,1955.0 L1944.4,1910.2 L1983.6,1928.2 L2022.8,1939.8 L2062.0,1937.6 L2101.2,1961.3 L2140.4,1988.7 L2179.6,2010.1 L2218.8,2028.4 L2258.0,2034.7 L2297.2,2038.7 L2336.4,2023.0 L2375.6,1988.3 L2414.8,1980.1 L2454.0,1959.9 L2493.2,1951.7 L2532.4,1980.1 L2571.6,2006.6 L2610.8,2016.6 L2650.0,2034.9 L2689.2,2041.9 L2728.4,2178.0" fill="none" stroke="#4fd3e3" stroke-width="2.2" stroke-linejoin="round" /><path d="M1613.0,2034.7 L1670.0,2041.0 L1709.2,2039.1 L1748.4,2008.6 L1787.6,2025.9 L1826.8,2031.3 L1866.0,2041.0 L1905.2,2040.4 L1944.4,2043.0 L1983.6,2004.5 L2022.8,2022.1 L2062.0,2027.5 L2101.2,2037.9 L2140.4,2060.0 L2179.6,2070.0 L2218.8,2080.0 L2258.0,2080.0 L2297.2,2080.0 L2336.4,2080.0 L2375.6,2080.0 L2414.8,2080.0 L2454.0,2080.0 L2493.2,2080.0 L2532.4,2080.0 L2571.6,2080.0 L2610.8,2080.0 L2650.0,2080.0 L2689.2,2080.0 L2728.4,2178.0" fill="none" stroke="#66d36a" stroke-width="2.4" stroke-linejoin="round" /></g>
</svg>
<div style="position:absolute;left:0;top:2042px;width:2880px;height:6px;background:#9c27b0"></div>
</body></html>
